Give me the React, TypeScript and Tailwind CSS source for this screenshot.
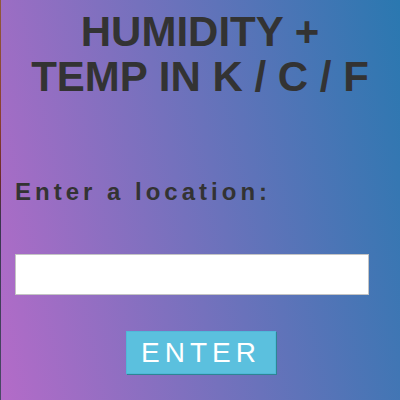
import React from "react";

export default function App() {
  return (
    <div className="relative w-[400px] h-[400px] overflow-hidden bg-[linear-gradient(78deg,#b46bc8,#2a78b0)] font-['Liberation_Sans',Arial,sans-serif]">
      <div className="absolute left-0 top-0 w-px h-full bg-[linear-gradient(180deg,#8f5a3a_0%,#8a3f2f_30%,#6a2a2a_45%,#3a3550_55%,#4a4a66_100%)]" />
      <div className="flex flex-col pt-[9px]">
        <h1 className="text-center font-bold text-[42px] leading-[45px] text-[#333333]">
          HUMIDITY +
          <br />
          TEMP IN K / C / F
        </h1>
        <div className="mt-[79px] pl-[15px] text-[24px] leading-[28px] font-bold tracking-[4px] text-[#333333]">
          Enter a location:
        </div>
        <div className="mt-[48px] pl-[15px]">
          <input
            type="text"
            className="block w-[354px] h-[41px] bg-white border border-[#c4c4c4] outline-none"
          />
        </div>
        <div className="mt-[36px] flex justify-center pl-[2px]">
          <button className="flex items-center justify-center w-[150px] h-[43px] bg-[#5bc0de] border border-[#4fb9d9] shadow-[1px_1px_0_#2f8494] text-white text-[28px] tracking-[5px] pl-0 leading-none font-['Liberation_Sans',Arial,sans-serif]">
            ENTER
          </button>
        </div>
      </div>
    </div>
  );
}
